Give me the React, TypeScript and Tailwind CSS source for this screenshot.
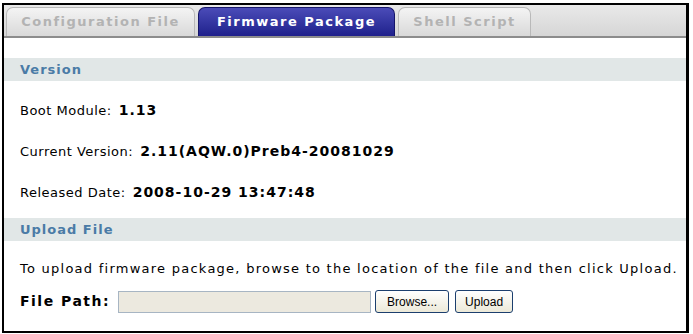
import React from 'react';

const tabs = [
  { label: 'Configuration File', active: false, w: 'w-[189px]' },
  { label: 'Firmware Package', active: true, w: 'w-[197px]' },
  { label: 'Shell Script', active: false, w: 'w-[133px]' },
];

const SectionHeader: React.FC<{ title: string }> = ({ title }) => (
  <div className="h-[23px] bg-[#e1e7e7] flex items-center pl-[16px] text-[13px] font-bold tracking-[1px] text-[#4a7ba6]">
    {title}
  </div>
);

const InfoRow: React.FC<{ label: string; value: string }> = ({ label, value }) => (
  <div className="h-[41px] flex items-center pl-[16px] text-[13px] text-black">
    <span className="tracking-[0.5px]">{label}:</span>
    <span className="font-bold text-[14px] ml-[7px] tracking-[1px]">{value}</span>
  </div>
);

export default function App() {
  return (
    <div className="w-[693px] h-[334px] bg-white pt-[3px] pl-[2px]" style={{ fontFamily: '"DejaVu Sans", Verdana, sans-serif' }}>
      <div className="w-[687px] h-[330px] border-2 border-r-[3px] border-black bg-white flex flex-col">
        {/* tab bar */}
        <div className="h-[33px] flex items-end gap-[3px] pl-[2px] bg-gradient-to-b from-[#e9e9e9] to-[#d6d6d6] border-b-2 border-[#8c8c8c]">
          {tabs.map((t) => (
            <div
              key={t.label}
              className={
                t.active
                  ? `${t.w} h-[29px] rounded-t-[7px] bg-gradient-to-b from-[#4b4bb8] to-[#20208c] border border-[#15156a] border-b-0 flex items-center justify-center text-[13px] font-bold tracking-[1.5px] text-white`
                  : `${t.w} h-[29px] rounded-t-[7px] bg-gradient-to-b from-[#f4f4f4] to-[#d9d9d9] border border-[#b9b9b9] border-b-0 flex items-center justify-center text-[13px] font-bold tracking-[1.5px] text-[#b3b3b3]`
              }
            >
              {t.label}
            </div>
          ))}
        </div>

        <div className="h-[20px]" />
        <SectionHeader title="Version" />
        <div className="pt-[9px] pb-[5px]">
          <InfoRow label="Boot Module" value="1.13" />
          <InfoRow label="Current Version" value="2.11(AQW.0)Preb4-20081029" />
          <InfoRow label="Released Date" value="2008-10-29 13:47:48" />
        </div>
        <SectionHeader title="Upload File" />
        <div className="pt-[20px] pl-[16px] text-[13px] leading-[16px] tracking-[1.25px] text-black">
          To upload firmware package, browse to the location of the file and then click Upload.
        </div>
        <div className="mt-[13px] flex items-center pl-[16px]">
          <span className="font-bold text-[14px] tracking-[1.5px] mr-[8px]">File Path:</span>
          <div className="w-[253px] h-[22px] bg-[#ece9df] border border-[#a7b5c3]" />
          <button
            className="ml-[4px] h-[23px] w-[74px] rounded-[3px] border border-[#1c3f6e] bg-gradient-to-b from-white to-[#ece9d8] text-[12px] text-black"
            style={{ fontFamily: '"Liberation Sans", Arial, sans-serif' }}
          >
            Browse...
          </button>
          <button
            className="ml-[6px] h-[23px] w-[58px] rounded-[3px] border border-[#1c3f6e] bg-gradient-to-b from-white to-[#ece9d8] text-[12px] text-black"
            style={{ fontFamily: '"Liberation Sans", Arial, sans-serif' }}
          >
            Upload
          </button>
        </div>
      </div>
    </div>
  );
}
